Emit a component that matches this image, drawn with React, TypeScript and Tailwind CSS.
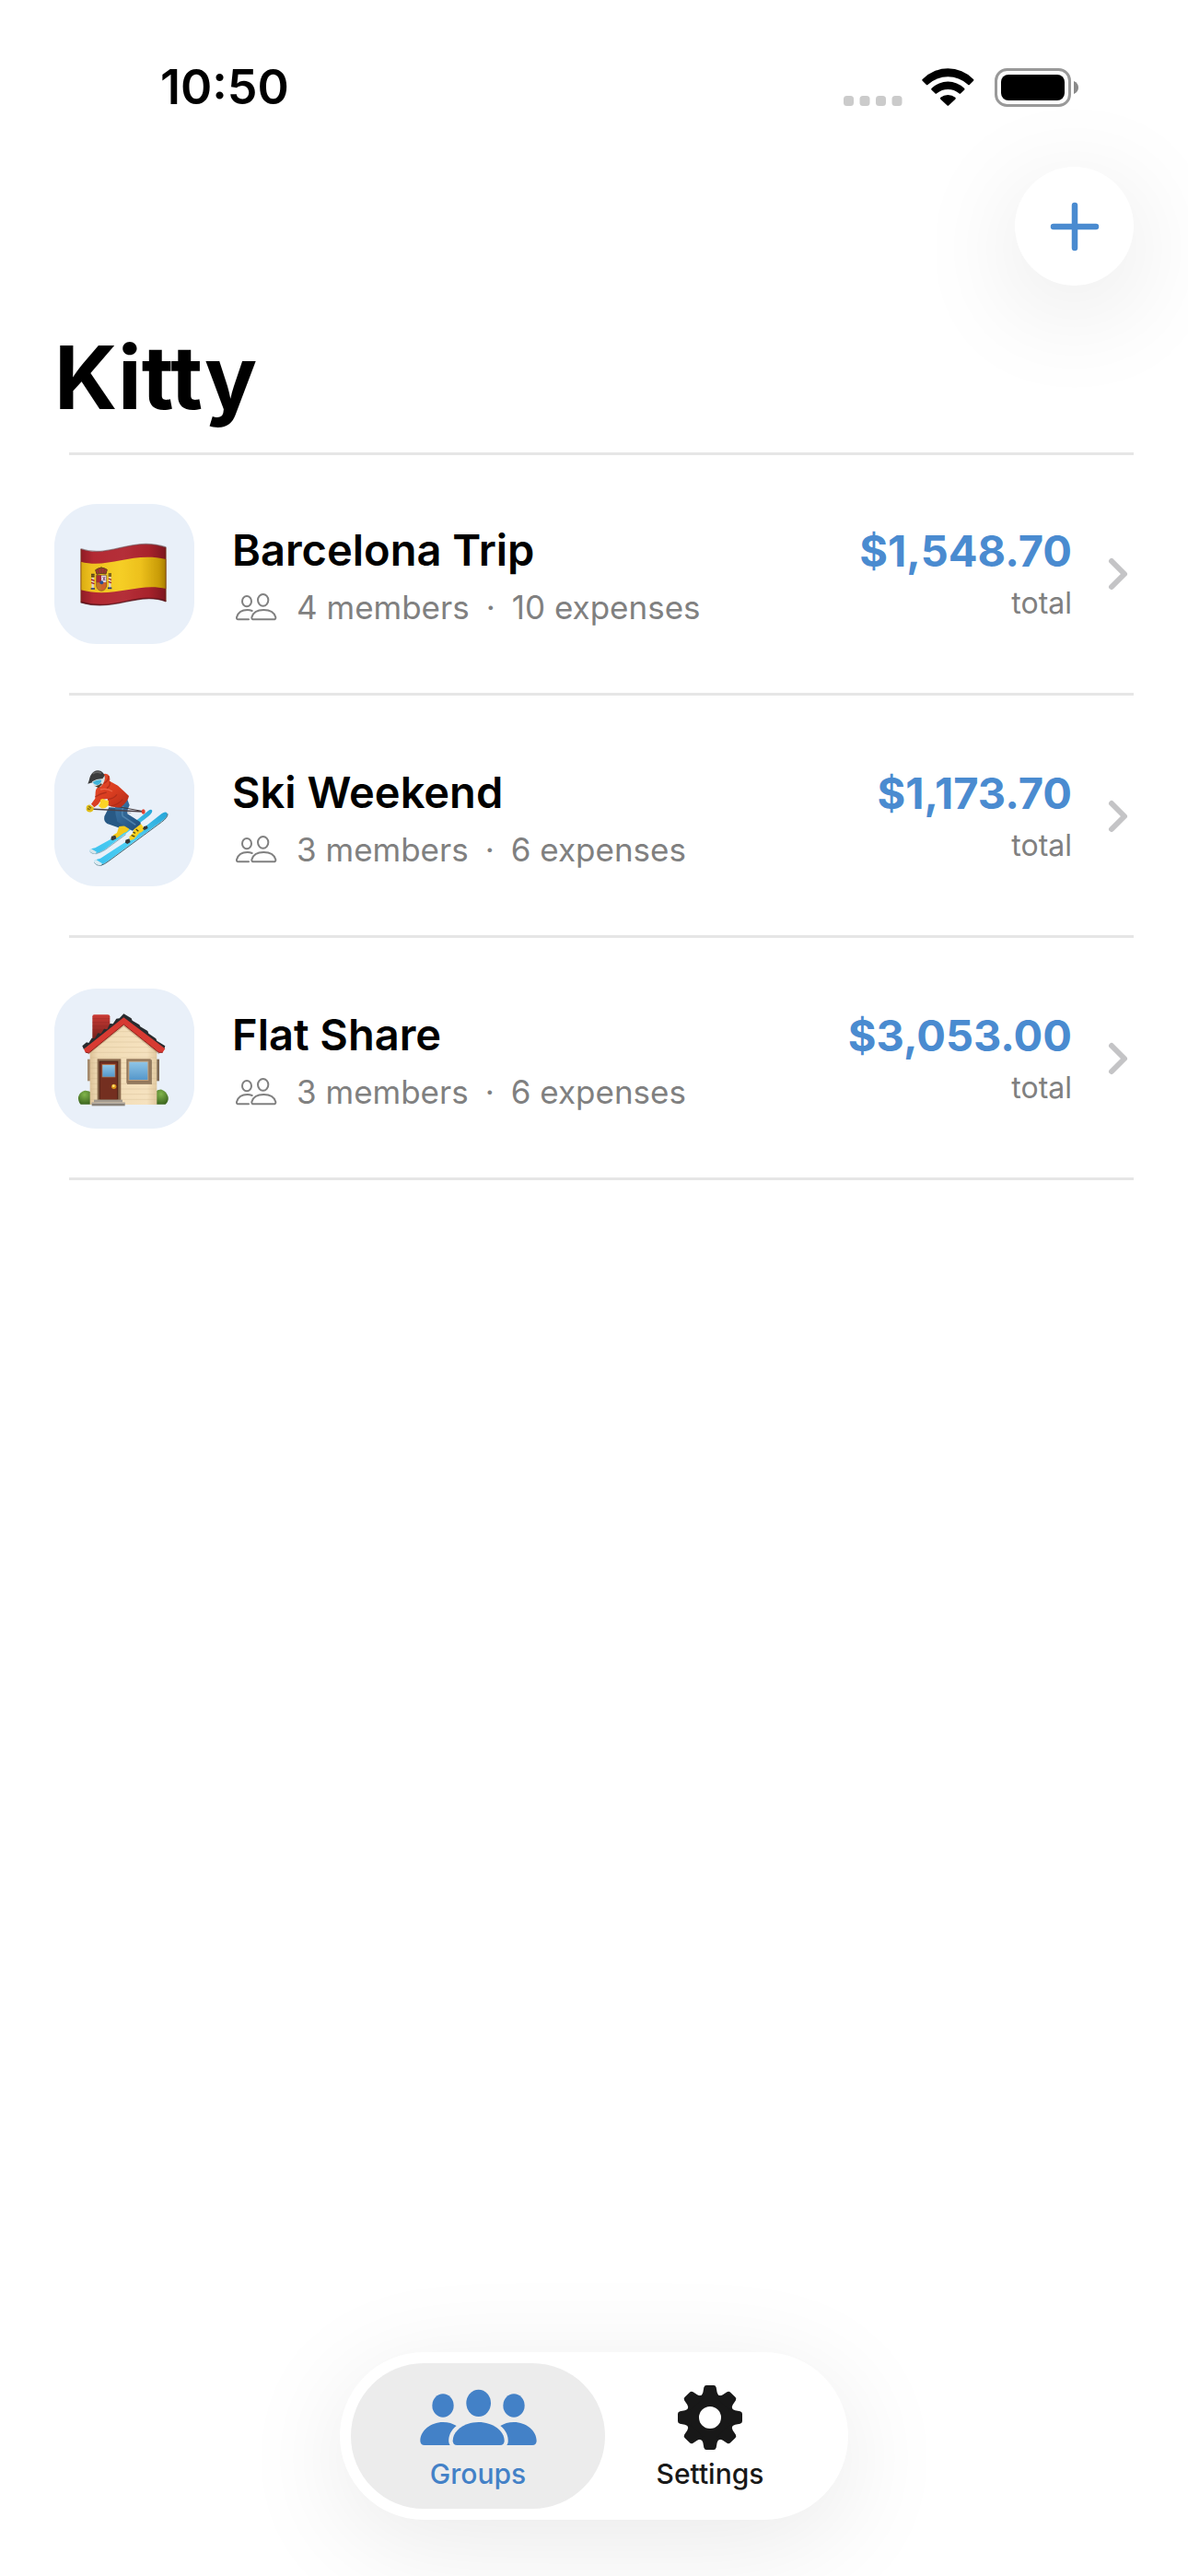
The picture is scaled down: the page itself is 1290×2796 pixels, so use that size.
import { useState } from 'react';
import type { ReactNode } from 'react';

type TabType = 'groups' | 'settings';

interface Group {
  id: number;
  name: string;
  members: number;
  expenses: number;
  total: string;
  icon: ReactNode;
}

// ============================================================================
// STATUS BAR ICONS
// ============================================================================
const SignalDots = () => (
  <svg width="64" height="42" viewBox="0 0 64 42" fill="#cbcbcb" aria-hidden="true">
    <rect x="0" y="30" width="11" height="11" rx="3.5" />
    <rect x="17.5" y="30" width="11" height="11" rx="3.5" />
    <rect x="35" y="30" width="11" height="11" rx="3.5" />
    <rect x="52.5" y="30" width="11" height="11" rx="3.5" />
  </svg>
);

const WifiIcon = () => (
  <svg width="57" height="42" viewBox="364 99 171 126" fill="#000" aria-hidden="true">
    <path d="M367 134A116 116 0 0 1 531 134Q535 137 532 140L520 152Q517 155 514 152A97 97 0 0 0 384 152Q381 155 378 152L366 140Q363 137 367 134Z" />
    <path d="M396 164A77 77 0 0 1 502 164Q505 167 502 170L491 181Q488 184 485 181A56 56 0 0 0 413 181Q410 184 407 181L396 170Q393 167 396 164Z" />
    <path d="M425 194A39 39 0 0 1 473 194Q476 197 473 200L452 220Q449 223 446 220L425 200Q422 197 425 194Z" />
  </svg>
);

const BatteryIcon = () => (
  <svg width="91" height="42" viewBox="0 0 91 42" aria-hidden="true">
    <rect x="1.5" y="1.5" width="80" height="39" rx="12" fill="none" stroke="#999" strokeWidth="3" />
    <rect x="7" y="7" width="69" height="28" rx="8" fill="#000" />
    <path d="M86 14C89.500 15.500 91 18 91 21S89.500 26.500 86 28Z" fill="#8a8a8a" />
  </svg>
);

// ============================================================================
// GROUP ICONS
// ============================================================================
const SpainFlag = () => (
  <svg className="size-full" viewBox="57 51 456 456" aria-hidden="true">
    <defs>
      <linearGradient id="flagYellow" x1="0" x2="1" y1="0" y2="0">
        <stop offset="0" stopColor="#d9ab12" />
        <stop offset="0.12" stopColor="#eec01f" />
        <stop offset="0.45" stopColor="#f6cf27" />
        <stop offset="0.7" stopColor="#edc11d" />
        <stop offset="0.92" stopColor="#c99c08" />
        <stop offset="1" stopColor="#a87c00" />
      </linearGradient>
      <linearGradient id="flagRed" x1="0" x2="1" y1="0" y2="0">
        <stop offset="0" stopColor="#8f1d27" />
        <stop offset="0.15" stopColor="#b32a33" />
        <stop offset="0.5" stopColor="#b5303a" />
        <stop offset="0.8" stopColor="#a8232c" />
        <stop offset="1" stopColor="#7c1720" />
      </linearGradient>
    </defs>
    <path d="M143 197C235 230 310 155 421 192V369C330 335 250 405 143 372Z" fill="url(#flagRed)" />
    <path d="M143 239C235 263 310 205 421 231V327C330 305 250 360 143 331Z" fill="url(#flagYellow)" />
    <path d="M143 197C235 230 310 155 421 192" fill="none" stroke="#6c5558" strokeWidth="4" opacity="0.6" />
    <path d="M143 371C250 404 330 334 421 368" fill="none" stroke="#4d1017" strokeWidth="5" opacity="0.7" />
    <path d="M144 198V371M420 193V368" stroke="#6b3511" strokeWidth="3" opacity="0.6" />
    {/* Pillars */}
    <g>
      <path d="M182 290V328M238 288V326" stroke="#d9d3cf" strokeWidth="7" />
      <path d="M177 297L188 301M177 307L188 311M233 294L243 298M233 304L243 308" stroke="#a52430" strokeWidth="4" />
      <path d="M177 281H188M177 287H188M233 279H243M233 285H243" stroke="#5a431c" strokeWidth="5" />
      <path d="M176 327H189M231 325H244" stroke="#27366f" strokeWidth="5" />
    </g>
    {/* Crown and shield */}
    <path d="M191 266Q210 252 229 265L225 279Q210 275 195 280Z" fill="#a5303a" stroke="#67431c" strokeWidth="3" />
    <path d="M210 255V275M198 262L202 277M221 261L218 276" stroke="#705217" strokeWidth="3" />
    <path d="M194 283H227V318Q224 333 211 334Q197 333 194 319Z" fill="#c5722a" />
    <path d="M194 283H210V307H194Z" fill="#a92b34" />
    <path d="M210 283H227V306H210Z" fill="#ddd3da" />
    <path d="M215 288L222 300M222 288L216 300" stroke="#8c4f79" strokeWidth="3" />
    <path d="M210 307H227V320Q221 329 211 333Z" fill="#d0622d" />
    <circle cx="211" cy="307" r="6" fill="#2d4f93" />
    <path d="M194 283H227V318Q224 333 211 334Q197 333 194 319Z" fill="none" stroke="#7d5523" strokeWidth="2" />
  </svg>
);

const Skier = () => (
  <svg className="size-full" viewBox="27 30 456 456" aria-hidden="true">
    <defs>
      <linearGradient id="skiBlue" x1="0" x2="1" y1="1" y2="0">
        <stop offset="0" stopColor="#3cc1ee" />
        <stop offset="0.5" stopColor="#4fd0f4" />
        <stop offset="1" stopColor="#26a5d8" />
      </linearGradient>
      <linearGradient id="jacket" x1="0" x2="1" y1="0" y2="1">
        <stop offset="0" stopColor="#e8502f" />
        <stop offset="0.55" stopColor="#d93d20" />
        <stop offset="1" stopColor="#b32b18" />
      </linearGradient>
      <linearGradient id="trousers" x1="0" x2="1" y1="0" y2="1">
        <stop offset="0" stopColor="#3f79a8" />
        <stop offset="1" stopColor="#1f4c7c" />
      </linearGradient>
    </defs>
    {/* Back ski */}
    <path d="M142 371Q148 380 162 379Q176 376 192 366L322 267Q347 249 346 240Q343 233 333 240L301 266L214 331L160 361Q143 364 142 371Z" fill="url(#skiBlue)" />
    <path d="M143 373Q149 381 163 380Q178 376 193 367L260 317" fill="none" stroke="#5c8798" strokeWidth="2" />
    <path d="M141 370L147 364L165 374L160 380Q146 379 141 370Z" fill="#d8e6ec" />
    {/* Back leg and boot */}
    <path d="M205 229L190 258Q187 275 199 282L240 296L262 288L255 268L231 259L246 231Z" fill="#285985" />
    <path d="M238 291L268 288L271 300Q265 309 254 312L232 328L216 329L219 319L231 312Z" fill="#f4c91b" />
    <path d="M213 323L226 320L229 331L217 337L211 334Z" fill="#3b3b3b" />
    {/* Front ski */}
    <path d="M156 406Q163 419 178 417Q190 413 203 403L374 276Q399 258 395 248Q389 240 377 249L262 340L177 395Q158 399 156 406Z" fill="url(#skiBlue)" />
    <path d="M157 408Q164 419 179 418Q191 414 204 404L376 277Q397 262 396 250" fill="none" stroke="#41636f" strokeWidth="3" />
    <path d="M155 405L163 399L183 412L178 418Q163 418 155 405Z" fill="#dcebf2" />
    {/* Front leg and boot */}
    <path d="M225 228L264 200L272 222Q263 240 265 250L307 277Q311 285 306 292L281 305L232 275Q225 253 225 228Z" fill="url(#trousers)" />
    <path d="M252 226Q245 247 250 258L292 286" fill="none" stroke="#5d91b9" strokeWidth="5" opacity="0.7" />
    <path d="M286 301L309 283L320 297Q319 307 304 313L286 333L273 337L271 325L283 313Z" fill="#f8d020" />
    <path d="M283 309L291 313M278 320L289 324M293 300L301 307" stroke="#4d4415" strokeWidth="4" />
    <path d="M259 335L271 331L275 342L265 348L258 344ZM319 291L329 289L332 297L321 303L315 299Z" fill="#353535" />
    {/* Poles */}
    <path d="M141 234L316 243" stroke="#4c4148" strokeWidth="4" />
    <path d="M197 220L317 242" stroke="#43393d" strokeWidth="3" />
    <path d="M264 246L277 247" stroke="#8b939d" strokeWidth="2" />
    <ellipse cx="317" cy="243" rx="6" ry="8" fill="#e04432" />
    {/* Jacket */}
    <path d="M185 121Q200 116 207 128Q209 137 207 143L234 158Q266 187 270 192Q267 210 243 229Q220 231 203 223L200 201Q178 202 170 219L157 229L147 218L160 200L161 179Q162 164 177 160Z" fill="url(#jacket)" />
    <path d="M188 151Q206 142 203 126M207 145Q212 158 198 167M160 195Q178 183 197 180M203 202Q220 201 231 187M211 225Q234 221 250 203" fill="none" stroke="#a42817" strokeWidth="4" opacity="0.7" />
    <path d="M177 171Q198 165 216 177" fill="none" stroke="#f4785a" strokeWidth="4" opacity="0.7" />
    {/* Gloves */}
    <path d="M131 228Q134 219 144 221L155 229Q157 240 147 244Q136 247 131 238Z" fill="#e2bf19" />
    <path d="M135 233L143 236M139 226L147 232" stroke="#7d6a12" strokeWidth="4" />
    <path d="M177 204Q187 198 191 205L204 207L203 222Q193 235 180 232L171 224L176 217Z" fill="#fbd326" />
    {/* Helmet and goggles */}
    <path d="M140 142Q143 122 155 113Q167 106 179 111Q190 117 192 131L184 139Q166 137 152 148L136 152Z" fill="#3c3c3d" />
    <path d="M152 119Q167 110 180 118" fill="none" stroke="#777" strokeWidth="5" opacity="0.7" />
    <path d="M150 145Q166 135 184 136L191 125Q195 143 178 161Q166 165 157 161Z" fill="#d6e2e4" />
    <path d="M152 147Q166 138 181 140Q179 153 167 156Q158 157 152 147Z" fill="#3fb3d8" />
    <path d="M158 158Q169 162 179 151L183 154L171 166Z" fill="#56351f" />
  </svg>
);

const House = () => (
  <svg className="size-full" viewBox="27 40 456 456" aria-hidden="true">
    <defs>
      <linearGradient id="wall" x1="0" x2="1" y1="0" y2="0">
        <stop offset="0" stopColor="#dcc298" />
        <stop offset="0.12" stopColor="#f0dbb5" />
        <stop offset="0.85" stopColor="#f6e2bf" />
        <stop offset="1" stopColor="#e0c89f" />
      </linearGradient>
      <linearGradient id="chimney" x1="0" x2="0" y1="0" y2="1">
        <stop offset="0" stopColor="#cb3b35" />
        <stop offset="1" stopColor="#71201b" />
      </linearGradient>
      <linearGradient id="glass" x1="0" x2="0" y1="0" y2="1">
        <stop offset="0" stopColor="#8fc5e6" />
        <stop offset="1" stopColor="#5597cb" />
      </linearGradient>
      <radialGradient id="bush" cx="0.45" cy="0.3" r="0.7">
        <stop offset="0" stopColor="#82b54c" />
        <stop offset="1" stopColor="#3d671f" />
      </radialGradient>
    </defs>
    <path d="M151 131Q151 125 157 125H201Q208 125 208 131V180L151 210Z" fill="url(#chimney)" />
    <path d="M151 138H208M151 150H208M151 162H208M151 174H208" stroke="#7e211f" strokeWidth="1.500" opacity="0.5" />
    {/* Bushes and shutters */}
    <path d="M150 417H113Q104 408 105 393Q109 376 126 372Q141 371 150 380Z" fill="url(#bush)" />
    <path d="M355 417H389Q400 407 398 393Q392 374 377 369Q365 367 355 377Z" fill="url(#bush)" />
    <rect x="135" y="270" width="9" height="71" fill="#a48a6e" />
    <rect x="360" y="270" width="9" height="71" fill="#7d6955" />
    {/* Walls */}
    <path d="M143 240L253 148L361 240V418H143Z" fill="url(#wall)" />
    <path d="M221 180H285M199 197H307M178 214H327M156 231H348M144 248H360M144 265H360M144 282H360M144 299H360M144 316H360M144 333H360M144 350H360M144 367H360M144 384H360M144 401H360" stroke="#cfb68d" strokeWidth="1.500" opacity="0.7" />
    <path d="M137 252L253 160L369 252" fill="none" stroke="#8d6a45" strokeWidth="6" opacity="0.35" />
    {/* Roof */}
    <path d="M118 227L132 215L139 217L149 201L159 202L169 185L179 187L189 171L199 173L208 154L218 155L229 138L239 137L253 122L278 137L281 144L304 158L307 164L331 178L334 186L358 203L361 210L388 227L385 237L253 142L123 238Z" fill="#292b2e" />
    <path d="M253 134L388 236L380 248H367L253 157L139 250L128 247L123 237Z" fill="#d73a32" />
    <path d="M253 157L367 248H380M253 157L139 250L128 247" fill="none" stroke="#8f211d" strokeWidth="3" />
    {/* Door */}
    <rect x="167" y="269" width="77" height="134" fill="#89694d" />
    <rect x="173" y="276" width="62" height="125" fill="#4b2117" />
    <rect x="176" y="279" width="56" height="122" fill="#742f20" />
    <rect x="182" y="286" width="44" height="43" fill="#b47852" />
    <rect x="184" y="289" width="40" height="38" fill="url(#glass)" />
    <circle cx="221" cy="359" r="8" fill="#d99216" />
    <circle cx="220" cy="357" r="4" fill="#ffe27a" />
    {/* Window */}
    <rect x="264" y="272" width="81" height="80" fill="#77624c" opacity="0.7" />
    <rect x="262" y="269" width="79" height="79" fill="#93775a" />
    <rect x="268" y="276" width="66" height="64" fill="#c3a17d" />
    <rect x="271" y="279" width="60" height="58" fill="url(#glass)" />
    {/* Step */}
    <rect x="156" y="402" width="93" height="8" fill="#a39b91" />
    <rect x="149" y="411" width="108" height="11" fill="#888179" />
    <path d="M149 413H257" stroke="#bcb4aa" strokeWidth="3" />
  </svg>
);

const MembersIcon = () => (
  <svg
    width="46"
    height="32"
    viewBox="645 336 138 96"
    fill="none"
    stroke="#808080"
    strokeWidth="6"
    strokeLinecap="round"
    strokeLinejoin="round"
    aria-hidden="true"
  >
    <ellipse cx="684" cy="365" rx="15" ry="17" />
    <ellipse cx="737" cy="361" rx="17" ry="19" />
    <path d="M690 424H656Q650 424 651 417C655 402 668 393 686 393Q694 393 701 396" />
    <path d="M707 424Q699 424 700 417C704 402 718 393 739 393S774 402 778 417Q779 424 771 424Z" />
  </svg>
);

// ============================================================================
// TAB BAR ICONS
// ============================================================================
const GroupsIcon = () => {
  const side =
    'M81 236C81 203 115 175 155 175C172 175 188 180 199 187C181 201 172 220 174 240Q175 246 178 250H95Q81 250 81 236Z';
  return (
    <svg width="128" height="72" viewBox="77 52 384 216" fill="currentColor" aria-hidden="true">
      <ellipse cx="155" cy="121" rx="35" ry="38" />
      <ellipse cx="271" cy="113" rx="40" ry="44" />
      <ellipse cx="386" cy="121" rx="35" ry="38" />
      <path d={side} />
      <path d={side} transform="translate(541 0) scale(-1 1)" />
      <path d="M187 236C187 203 225 175 271 175S355 203 355 236Q355 250 341 250H201Q187 250 187 236Z" />
    </svg>
  );
};

const GEAR_ANGLES = [0, 45, 90, 135, 180, 225, 270, 315];

const SettingsIcon = () => (
  <svg width="72" height="72" viewBox="-108 -108 216 216" aria-hidden="true">
    <circle r="57" fill="none" stroke="currentColor" strokeWidth="42" />
    {GEAR_ANGLES.map((angle) => (
      <path
        key={angle}
        d="M-34 -69Q-25 -72 -23 -82L-20 -98Q-18 -105 -12 -105H12Q18 -105 20 -98L23 -82Q25 -72 34 -69L20 -60H-20Z"
        transform={`rotate(${angle})`}
        fill="currentColor"
      />
    ))}
  </svg>
);

// ============================================================================
// DATA
// ============================================================================
const GROUPS: Group[] = [
  { id: 1, name: 'Barcelona Trip', members: 4, expenses: 10, total: '$1,548.70', icon: <SpainFlag /> },
  { id: 2, name: 'Ski Weekend', members: 3, expenses: 6, total: '$1,173.70', icon: <Skier /> },
  { id: 3, name: 'Flat Share', members: 3, expenses: 6, total: '$3,053.00', icon: <House /> },
];

const TABS: { id: TabType; label: string; icon: ReactNode }[] = [
  { id: 'groups', label: 'Groups', icon: <GroupsIcon /> },
  { id: 'settings', label: 'Settings', icon: <SettingsIcon /> },
];

const GroupRow = ({ group }: { group: Group }) => (
  <li className="group">
    <a href={`#group-${group.id}`} className="flex items-center pt-[55px] pb-[53px] group-first:pt-[53px]">
      <span className="size-[152px] shrink-0 overflow-hidden rounded-[46px] bg-[#e9f0f9]">{group.icon}</span>
      <span className="ml-[41px] flex min-w-0 flex-1 flex-col gap-3">
        <span className="truncate text-[47px] leading-[60px] font-semibold text-black">{group.name}</span>
        <span className="flex items-center pl-[3px] text-[35px] leading-[40px] text-[#808080]">
          <MembersIcon />
          <span className="ml-[21px]">{group.members} members</span>
          <span className="mx-[18px]">·</span>
          <span>{group.expenses} expenses</span>
        </span>
      </span>
      <span className="flex flex-col items-end gap-3">
        <span className="text-[47px] leading-[52px] font-bold text-[#4a8bd0]">{group.total}</span>
        <span className="text-[32px] leading-[38px] text-[#808080]">total</span>
      </span>
      <svg className="mr-1 ml-9" width="27" height="38" viewBox="0 0 27 38" fill="none" aria-hidden="true">
        <path d="M7 5L21 19L7 33" stroke="#c4c4c6" strokeWidth="6" strokeLinecap="round" strokeLinejoin="round" />
      </svg>
    </a>
    <div className="ml-4 h-[3px] bg-[#e6e6e6]" />
  </li>
);

const App = () => {
  const [activeTab, setActiveTab] = useState<TabType>('groups');

  return (
    <div className="flex min-h-screen flex-col overflow-hidden bg-white font-['Inter',sans-serif]">
      {/* Status bar */}
      <div className="flex items-center justify-between pt-[71px] pr-[119px] pl-[174px]">
        <span className="text-[52px] leading-[48px] font-semibold text-black">10:50</span>
        <div className="flex items-center">
          <SignalDots />
          <span className="ml-[21px]">
            <WifiIcon />
          </span>
          <span className="ml-[22px]">
            <BatteryIcon />
          </span>
        </div>
      </div>

      {/* Header */}
      <header className="px-[59px] pt-[62px]">
        <div className="flex justify-end">
          <button
            type="button"
            aria-label="Add group"
            className="flex size-[129px] items-center justify-center rounded-full bg-white shadow-[0_24px_120px_rgba(0,0,0,0.11)]"
          >
            <svg width="54" height="54" viewBox="0 0 54 54" aria-hidden="true">
              <path d="M27 4V50M4 27H50" stroke="#4a8bd0" strokeWidth="6.500" strokeLinecap="round" />
            </svg>
          </button>
        </div>
        <h1 className="mt-10 text-[95px] leading-[120px] font-bold text-black">Kitty</h1>
      </header>

      {/* Group list */}
      <main className="flex-1 px-[59px] pt-[21px]">
        <div className="ml-4 h-[3px] bg-[#e6e6e6]" />
        <ul>
          {GROUPS.map((group) => (
            <GroupRow key={group.id} group={group} />
          ))}
        </ul>
      </main>

      {/* Tab bar */}
      <nav className="flex justify-center pb-[61px]">
        <div className="flex rounded-full bg-white p-3 shadow-[0_24px_120px_rgba(0,0,0,0.09)]">
          {TABS.map((tab) => (
            <button
              key={tab.id}
              type="button"
              onClick={() => setActiveTab(tab.id)}
              className={`flex w-[276px] flex-col items-center rounded-full pt-[23px] pb-5 last:-ml-6 ${
                activeTab === tab.id ? 'bg-[#ececec] text-[#4381c7]' : 'text-[#181818]'
              }`}
            >
              {tab.icon}
              <span className="mt-[7px] text-[30px] leading-[36px] font-medium">{tab.label}</span>
            </button>
          ))}
        </div>
      </nav>
    </div>
  );
};

export default App;
